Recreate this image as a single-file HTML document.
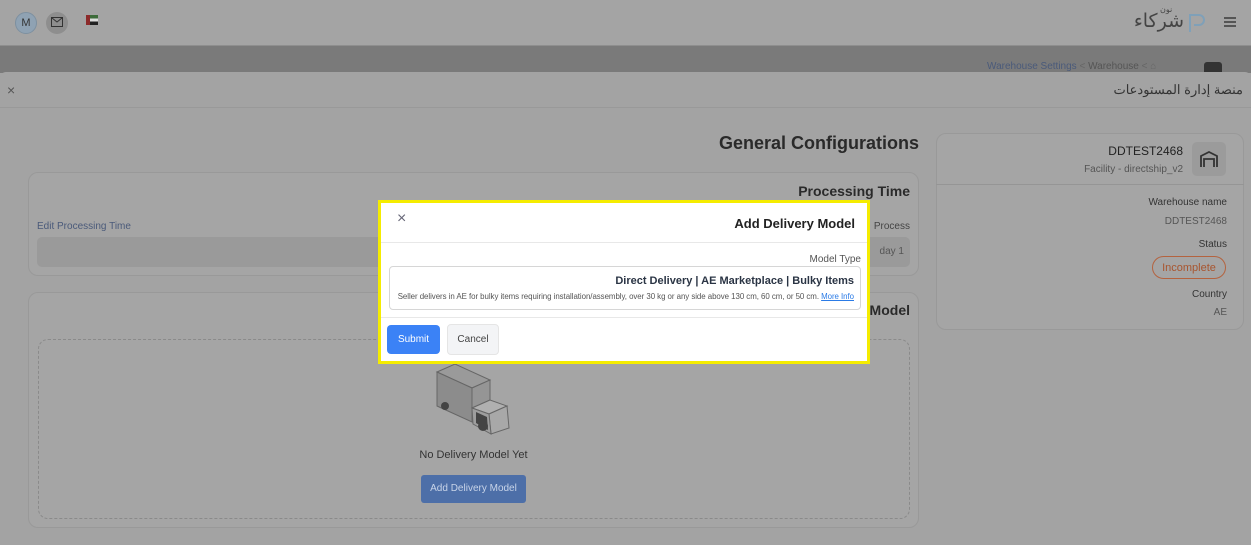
<!DOCTYPE html>
<html><head><meta charset="utf-8"><style>
*{box-sizing:border-box;margin:0;padding:0}
body{width:1251px;height:545px;overflow:hidden;background:#a3a3a3;font-family:"Liberation Sans","Noto Sans CJK SC",sans-serif;position:relative;color:#333}
.abs{position:absolute}
.hdr{left:0;top:0;width:1251px;height:46px;background:#a4a4a4;border-bottom:1px solid #8e8e8e}
.band{left:0;top:46px;width:1251px;height:27px;background:#7a7a7a}
.panel{left:0;top:72px;width:1251px;height:473px;background:#a3a3a3;border-radius:6px 6px 0 0}
.card{background:#a5a5a5;border:1px solid #999;border-radius:10px}
.modal{left:378px;top:200px;width:492px;height:164px;background:#fff;border:3px solid #f5ec00}
</style></head><body>
<div class="abs hdr"></div>
<div class="abs" style="left:15px;top:12px;width:22px;height:22px;border-radius:50%;background:#8fa2b3;border:1px solid #7d90a0;font-size:11px;color:#333;text-align:center;line-height:20px">M</div>
<div class="abs" style="left:46px;top:12px;width:22px;height:22px;border-radius:50%;background:#8e8e8e"></div>
<svg class="abs" style="left:51px;top:17px" width="12" height="10"><rect x="0.5" y="0.5" width="11" height="9" fill="none" stroke="#333"/><path d="M1 1 L6 5 L11 1" fill="none" stroke="#333"/></svg>
<div class="abs" style="left:86px;top:15px;width:12px;height:10px;background:linear-gradient(#3d6b3a 33%,#ddd 33%,#ddd 66%,#222 66%)"><div style="width:4px;height:10px;background:#8c2a2a"></div></div>
<div class="abs" style="left:1128px;top:10px;width:56px;text-align:right;font-size:19px;color:#444;white-space:nowrap;font-family:'DejaVu Sans',sans-serif" dir="rtl">شركاء</div>
<div class="abs" style="left:1160px;top:5px;font-size:8px;color:#444;font-family:'DejaVu Sans',sans-serif">نون</div>
<svg class="abs" style="left:1187px;top:12px" width="18" height="22"><path d="M3 20V3h9a5 5 0 0 1 0 10H7" fill="none" stroke="#7fa0b8" stroke-width="2"/></svg>
<div class="abs" style="left:1224px;top:17px;width:12px;height:1.5px;background:#555;box-shadow:0 4px 0 #555,0 8px 0 #555"></div>
<div class="abs band"></div>
<div class="abs" style="left:987px;top:61px;font-size:10px;color:#4a5a7a;white-space:nowrap">Warehouse Settings <span style="color:#666">&lt;</span> <span style="color:#555">Warehouse</span> <span style="color:#666">&lt; ⌂</span></div>
<div class="abs" style="left:1204px;top:62px;width:18px;height:12px;background:#333;border-radius:3px 3px 0 0"></div>
<div class="abs panel"></div>
<div class="abs" style="left:0;top:107px;width:1251px;height:1px;background:#999"></div>
<div class="abs" style="left:7px;top:82px;font-size:14px;color:#555">×</div>
<div class="abs" style="left:1043px;top:82px;width:200px;text-align:right;font-size:13px;color:#333;white-space:nowrap" dir="rtl">منصة إدارة المستودعات</div>
<div class="abs" style="left:600px;top:133px;width:319px;text-align:right;font-size:18px;font-weight:bold;color:#2a2a2a">General Configurations</div>
<div class="abs card" style="left:936px;top:133px;width:308px;height:197px"></div>
<div class="abs" style="left:936px;top:184px;width:308px;height:1px;background:#959595"></div>
<div class="abs" style="left:1192px;top:142px;width:34px;height:34px;background:#9b9b9b;border-radius:5px"></div>
<svg class="abs" style="left:1199px;top:149px" width="20" height="20"><path d="M2 18V7l8-4 8 4v11M5 18v-8h10v8" fill="none" stroke="#333" stroke-width="1.8"/></svg>
<div class="abs" style="left:1000px;top:144px;width:183px;text-align:right;font-size:12px;color:#222">DDTEST2468</div>
<div class="abs" style="left:1000px;top:164px;width:183px;text-align:right;font-size:10px;color:#555">Facility - directship_v2</div>
<div class="abs" style="left:1000px;top:197px;width:227px;text-align:right;font-size:10px;color:#333">Warehouse name</div>
<div class="abs" style="left:1000px;top:216px;width:227px;text-align:right;font-size:10px;color:#555">DDTEST2468</div>
<div class="abs" style="left:1000px;top:239px;width:227px;text-align:right;font-size:10px;color:#333">Status</div>
<div class="abs" style="left:1152px;top:256px;width:74px;height:23px;border:1.5px solid #b4633f;border-radius:12px;font-size:11px;color:#a8552f;display:flex;align-items:center;justify-content:center">Incomplete</div>
<div class="abs" style="left:1000px;top:289px;width:227px;text-align:right;font-size:10px;color:#333">Country</div>
<div class="abs" style="left:1000px;top:307px;width:227px;text-align:right;font-size:10px;color:#555">AE</div>
<div class="abs card" style="left:28px;top:172px;width:891px;height:104px"></div>
<div class="abs" style="left:600px;top:183px;width:310px;text-align:right;font-size:14px;font-weight:bold;color:#2a2a2a">Processing Time</div>
<div class="abs" style="left:37px;top:221px;font-size:10px;color:#4a5a7a">Edit Processing Time</div>
<div class="abs" style="left:860px;top:221px;width:50px;text-align:right;font-size:10px;color:#444">Process</div>
<div class="abs" style="left:37px;top:237px;width:873px;height:30px;background:#9a9a9a;border-radius:5px"></div>
<div class="abs" style="left:860px;top:246px;width:44px;text-align:right;font-size:10px;color:#555">day 1</div>
<div class="abs card" style="left:28px;top:292px;width:891px;height:236px"></div>
<div class="abs" style="left:800px;top:302px;width:110px;text-align:right;font-size:14px;font-weight:bold;color:#2a2a2a">Model</div>
<div class="abs" style="left:38px;top:339px;width:872px;height:180px;border:1px dashed #8a8a8a;border-radius:10px"></div>
<svg class="abs" style="left:433px;top:360px" width="80" height="75">
<path d="M4 12 L22 4 L57 20 L39 28Z" fill="#9a9a9a" stroke="#666"/>
<path d="M4 12 L39 28 L39 62 L4 46Z" fill="#8c8c8c" stroke="#666"/>
<path d="M39 28 L57 20 L57 40 L39 48Z" fill="#959595" stroke="#666"/>
<path d="M39 48 L57 40 L74 46 L56 54Z" fill="#b0b0b0" stroke="#666"/>
<path d="M56 54 L74 46 L76 68 L58 74Z" fill="#a8a8a8" stroke="#666"/>
<path d="M39 48 L56 54 L58 74 L40 64Z" fill="#9e9e9e" stroke="#666"/>
<path d="M43 52 L54 57 L55 70 L43 63Z" fill="#444"/>
<circle cx="12" cy="46" r="4" fill="#444"/><circle cx="50" cy="66" r="5" fill="#444"/></svg>
<div class="abs" style="left:380px;top:449px;width:187px;text-align:center;font-size:11px;color:#333">No Delivery Model Yet</div>
<div class="abs" style="left:421px;top:475px;width:105px;height:28px;background:#4d6fa8;border-radius:3px;font-size:10px;color:#c8d4e8;text-align:center;line-height:28px">Add Delivery Model</div>
<div class="abs modal">
 <div class="abs" style="left:16px;top:7px;font-size:16px;color:#667">×</div>
 <div class="abs" style="left:200px;top:13px;width:274px;text-align:right;font-size:13px;font-weight:bold;color:#222">Add Delivery Model</div>
 <div class="abs" style="left:0;top:39px;width:486px;height:1px;background:#e8e8e8"></div>
 <div class="abs" style="left:300px;top:51px;width:180px;text-align:right;font-size:10px;color:#555">Model Type</div>
 <div class="abs" style="left:8px;top:63px;width:472px;height:44px;border:1px solid #d6d6d6;border-radius:4px"></div>
 <div class="abs" style="left:100px;top:72px;width:373px;text-align:right;font-size:11px;font-weight:bold;color:#2a3444">Direct Delivery | AE Marketplace | Bulky Items</div>
 <div class="abs" style="left:10px;top:89px;width:463px;text-align:right;font-size:7.9px;color:#555;white-space:nowrap;letter-spacing:-0.05px">Seller delivers in AE for bulky items requiring installation/assembly, over 30 kg or any side above 130 cm, 60 cm, or 50 cm. <span style="color:#2b7be6;text-decoration:underline">More Info</span></div>
 <div class="abs" style="left:0;top:114px;width:486px;height:1px;background:#e8e8e8"></div>
 <div class="abs" style="left:6px;top:122px;width:53px;height:29px;background:#3b82f6;border-radius:4px;color:#fff;font-size:10px;text-align:center;line-height:29px">Submit</div>
 <div class="abs" style="left:66px;top:121px;width:52px;height:31px;background:#f3f4f6;border:1px solid #e5e5e5;border-radius:4px;color:#444;font-size:10px;text-align:center;line-height:29px">Cancel</div>
</div>
</body></html>
